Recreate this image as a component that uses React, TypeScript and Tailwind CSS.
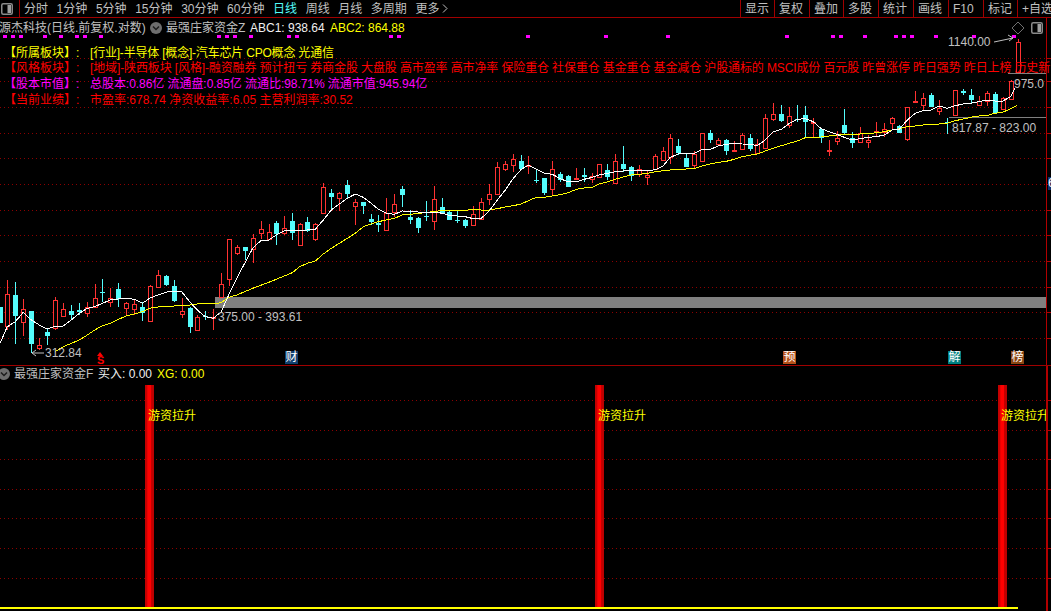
import React from "react";

type C = [number, number, number, number, number, number];
// [x, bodyTop, bodyBottom, high, low, isUp]
const zone3: C[] = [
[-1,380,428,380,428,0],[22,342,437,300,450,1],[46,345,407,306,492,0],[70,388,426,357,468,1],[94,393,492,393,520,0],[118,496,505,475,510,1],[142,456,468,445,495,0],[166,361,445,350,450,1],[190,388,407,368,412,1],[214,393,405,376,420,0],[238,391,397,370,405,0],[262,380,398,365,410,1],[284,355,381,312,385,1],[307,336,338,297,367,0],[331,355,367,325,380,1],[355,327,358,308,380,0],[379,369,383,365,405,1],[403,373,387,360,405,1],[427,381,398,365,422,0],[449,319,422,316,422,1],[473,286,320,270,322,1],[497,288,315,284,318,0],[521,319,364,300,366,0],[545,394,403,355,413,1],[569,385,440,382,458,0],[592,412,449,405,450,1],[616,409,411,392,420,0],[640,410,413,388,450,1],[664,313,350,280,352,1],[686,178,298,178,318,1],[710,202,218,195,224,1],[734,202,212,202,240,0],[758,175,207,162,248,1],[782,148,160,124,178,1],[806,157,177,132,180,1],[829,128,162,124,194,0],[853,145,160,108,166,1],[877,124,160,100,180,0],[899,132,194,130,197,1],[922,126,152,112,155,0],[946,132,176,128,182,1],[970,22,98,10,98,1],[994,39,50,28,90,0],[1018,40,55,36,92,1],[1042,15,42,0,55,0]];
const zone4: C[] = [
[16,247,257,238,315,1],[40,247,258,247,282,0],[64,297,305,282,315,0],[85,310,315,285,335,0],[109,280,329,235,329,1],[133,253,275,222,290,1],[157,208,225,198,260,0],[181,292,300,270,312,0],[205,294,323,290,338,0],[228,288,290,243,302,0],[253,238,304,198,330,1],[277,262,280,234,280,0],[298,275,299,270,300,0],[322,300,302,272,310,0],[346,300,318,296,323,0],[370,283,315,258,316,1],[394,247,298,235,300,1],[418,223,236,193,255,1],[442,141,221,126,224,1],[466,133,146,124,152,1],[490,118,134,102,155,1],[514,124,147,105,148,0],[535,136,138,108,162,1],[559,180,182,148,188,0],[583,175,219,175,225,0],[607,148,208,124,226,1],[631,163,179,156,186,0],[655,168,200,165,202,0],[679,175,178,144,180,1],[703,165,170,144,186,0],[727,169,177,160,188,1],[748,133,171,132,172,1],[772,151,170,132,180,0],[796,124,188,102,188,1],[820,132,148,78,155,0],[844,141,168,138,182,0],[868,148,162,135,170,1],[892,166,172,150,195,1],[916,109,146,103,150,1],[940,94,119,82,122,1],[961,54,110,42,132,1],[985,78,100,57,106,0],[1009,114,140,100,142,0],[1033,103,134,94,145,1]];
const zone5: C[] = [
[7,160,242,160,242,1],[31,160,180,150,188,0],[55,180,191,175,195,1],[79,181,213,178,225,0],[103,210,214,184,216,1],[127,166,207,158,208,1],[149,175,206,162,214,0],[172,193,218,178,220,1],[196,115,203,102,205,1],[220,102,118,70,122,1],[244,102,122,75,125,0],[268,109,135,82,145,1],[292,116,121,75,125,0],[316,104,127,78,175,0],[340,126,130,115,175,1],[362,148,174,145,190,0],[386,209,212,180,228,1],[410,173,182,152,196,1],[433,135,160,88,165,0],[457,175,188,156,204,0],[481,160,185,140,188,1],[505,180,186,165,204,1],[529,153,157,126,170,1],[553,146,156,130,170,1],[577,114,130,110,148,1],[598,139,158,135,160,0],[622,82,177,82,182,1],[646,64,67,34,68,1],[670,54,74,40,92,1],[694,44,80,40,82,0],[718,84,92,60,105,1],[742,125,127,115,163,0],[766,31,105,30,108,1],[790,34,39,28,44,0],[812,45,60,28,70,0],[836,62,74,48,78,1],[860,38,62,34,78,1],[884,42,100,36,102,0],[908,54,88,52,90,1],[932,3,58,0,58,1]];

const conv = (cs: C[], ox: number, oy: number): C[] =>
  cs.map(([x, a, b, h, l, u]) => [ox + x / 3, oy + a / 3, oy + b / 3, oy + h / 3, oy + l / 3, u] as C);

const candles: C[] = [
  ...conv(zone3, 0, 180),
  ...conv(zone4, 350, 120),
  ...conv(zone5, 700, 80),
  [1018, 42, 72, 39, 72, 1],
];

type P = [number, number];
const line = (ps: P[], ox: number, oy: number) => ps.map(([x, y]) => `${(ox + x / 3).toFixed(1)},${(oy + y / 3).toFixed(1)}`).join(" ");

const white3: P[] = [[0,490],[22,440],[46,425],[70,397],[94,420],[118,435],[142,447],[166,438],[190,438],[214,420],[238,400],[262,385],[284,380],[307,370],[331,360],[355,357],[379,355],[403,358],[427,370],[449,355],[473,345],[497,337],[521,333],[545,335],[569,365],[592,390],[616,410],[640,415],[664,395],[686,345],[710,295],[734,250],[758,205],[782,182],[806,180],[829,165],[853,153],[877,152],[899,152],[922,150],[946,148],[970,120],[994,90],[1018,72],[1042,55]];
const white4: P[] = [[16,222],[40,232],[64,250],[85,268],[109,280],[133,283],[157,273],[181,274],[205,276],[228,278],[253,276],[277,280],[298,286],[322,288],[346,290],[370,296],[394,295],[418,272],[442,240],[466,210],[490,175],[514,148],[535,136],[559,148],[583,160],[607,163],[631,176],[655,186],[679,185],[703,178],[727,172],[748,165],[772,160],[796,155],[820,153],[844,150],[868,153],[892,152],[916,149],[940,137],[961,112],[985,102],[1009,100],[1033,100]];
const white5: P[] = [[7,208],[31,208],[55,198],[79,193],[103,190],[127,192],[149,193],[172,197],[196,180],[220,155],[244,148],[268,130],[292,118],[316,116],[340,125],[362,145],[386,155],[410,163],[433,172],[457,180],[481,176],[505,172],[529,170],[553,165],[577,150],[598,148],[622,120],[646,100],[670,92],[694,90],[718,78],[742,85],[766,77],[790,72],[812,70],[836,65],[860,60],[884,63],[908,63],[932,50],[945,25]];
const yellow3: P[] = [[165,515],[190,500],[214,490],[238,480],[262,465],[284,450],[307,437],[331,430],[355,418],[379,408],[403,402],[427,395],[449,385],[473,381],[497,380],[521,378],[545,377],[569,375],[592,372],[616,370],[640,372],[664,368],[686,352],[710,345],[734,335],[758,325],[782,316],[806,307],[829,298],[853,288],[877,278],[899,260],[922,250],[946,243],[970,222],[994,205],[1018,190],[1042,175]];
const yellow4: P[] = [[16,340],[40,320],[64,312],[85,305],[109,300],[133,295],[157,285],[181,283],[205,280],[228,278],[253,274],[277,272],[298,271],[346,271],[370,268],[394,270],[418,270],[442,266],[466,261],[490,257],[514,252],[535,242],[559,232],[583,232],[607,228],[631,224],[655,218],[679,208],[703,204],[727,202],[748,192],[772,186],[796,178],[820,171],[844,165],[868,163],[892,160],[916,155],[940,152],[961,150],[985,148],[1009,147],[1033,146]];
const yellow5: P[] = [[7,258],[31,252],[55,247],[79,244],[103,238],[127,230],[149,226],[172,222],[196,213],[220,205],[244,197],[268,190],[292,183],[316,173],[340,172],[362,171],[386,168],[410,165],[433,162],[457,162],[481,162],[505,161],[529,158],[553,155],[577,150],[598,146],[622,140],[646,138],[670,135],[694,133],[718,132],[742,130],[766,122],[790,117],[812,112],[836,108],[860,107],[884,100],[908,97],[932,86],[952,76]];

const whitePts = [line(white3, 0, 180), line(white4, 350, 120), line(white5, 700, 80)].join(" ");
const yellowPts = [line(yellow3, 0, 180), line(yellow4, 350, 120), line(yellow5, 700, 80)].join(" ");

const RED = "#ff3232";
const CYAN = "#54fcfc";
const GRID = "#8c0000";
const AXIS = "#b00000";

const mainGrid = [58, 81, 107, 133, 158, 184, 210, 235, 261, 287, 312, 338];
const subGrid = [400, 430, 459, 489, 518, 548, 578];
const dots = [5, 13, 21, 45, 61, 77, 85, 101, 219, 227, 235, 251, 289, 297, 391, 399, 528, 606, 668, 787, 833, 841, 865, 896, 904, 912, 936, 974, 1014];

function Candle({ c }: { c: C }) {
  const [x0, a, b, h, l, up] = c;
  const x = Math.round(x0);
  const t = Math.round(a);
  const bt = Math.max(Math.round(b), t + 1);
  const hi = Math.round(h);
  const lo = Math.round(l);
  const col = up ? RED : CYAN;
  return (
    <g shapeRendering="crispEdges">
      <line x1={x + 0.5} x2={x + 0.5} y1={hi} y2={t} stroke={col} />
      <line x1={x + 0.5} x2={x + 0.5} y1={bt} y2={lo} stroke={col} />
      {up ? (
        <rect x={x - 1.5} y={t + 0.5} width={4} height={bt - t} fill="#000" stroke={col} />
      ) : (
        <rect x={x - 2} y={t} width={5} height={bt - t} fill={col} />
      )}
    </g>
  );
}

function PanelIcon({ className }: { className: string }) {
  return (
    <svg className={className} width="12" height="12" viewBox="0 0 12 12">
      <rect x="0.75" y="0.75" width="10.5" height="10.5" rx="1.5" fill="#000" stroke="#8a8a8a" strokeWidth="1.5" />
      <rect x="6.5" y="2" width="3.5" height="8" fill="#a0a0a0" />
    </svg>
  );
}

function Chevron({ className }: { className: string }) {
  return (
    <svg className={className} width="12" height="12" viewBox="0 0 12 12">
      <circle cx="6" cy="6" r="6" fill="#6e6e6e" />
      <path d="M3 4.5 L6 7.5 L9 4.5" fill="none" stroke="#1c1c1c" strokeWidth="1.5" />
    </svg>
  );
}

const navLeft = ["分时", "1分钟", "5分钟", "15分钟", "30分钟", "60分钟", "日线", "周线", "月线", "多周期", "更多"];
const navRight: [string, string][] = [
  ["显示", "w-[34px]"], ["复权", "w-[35px]"], ["叠加", "w-[34px]"], ["多股", "w-[35px]"], ["统计", "w-[35px]"],
  ["画线", "w-[35px]"], ["F10", "w-[35px]"], ["标记", "w-[34px]"], ["+自选", "w-[34px]"],
];

const rows: { label: string; text: string; labelCls: string; textCls: string }[] = [
  { label: "【所属板块】:", text: "[行业]-半导体 [概念]-汽车芯片 CPO概念 光通信", labelCls: "text-[#ffff00]", textCls: "text-[#ffff00] tracking-[-0.2px]" },
  { label: "【风格板块】:", text: "[地域]-陕西板块 [风格]-融资融券 预计扭亏 券商金股 大盘股 高市盈率 高市净率 保险重仓 社保重仓 基金重仓 基金减仓 沪股通标的 MSCI成份 百元股 昨曾涨停 昨日强势 昨日上榜 历史新高", labelCls: "text-[#ff0000]", textCls: "text-[#ff0000] tracking-[-0.12px]" },
  { label: "【股本市值】:", text: "总股本:0.86亿 流通盘:0.85亿 流通比:98.71% 流通市值:945.94亿", labelCls: "text-[#ff00ff]", textCls: "text-[#ff00ff] tracking-[-0.05px]" },
  { label: "【当前业绩】:", text: "市盈率:678.74 净资收益率:6.05 主营利润率:30.52", labelCls: "text-[#ff0000]", textCls: "text-[#ff0000]" },
];

const markers: [string, string, string][] = [
  ["财", "left-[285px]", "bg-[#12406e]"],
  ["预", "left-[783px]", "bg-[#b5501a]"],
  ["解", "left-[948px]", "bg-[#008080]"],
  ["榜", "left-[1011px]", "bg-[#8b4513]"],
];

export default function App() {
  return (
    <div className="w-[1051px] h-[611px] bg-black overflow-hidden flex flex-col text-[12px] leading-[16px] text-[#c0c0c0] font-['Liberation_Sans','Noto_Sans_CJK_SC',sans-serif]">
      {/* toolbar */}
      <div className="h-[18px] shrink-0 flex items-stretch border-b border-[#a00000] whitespace-nowrap">
        <div className="w-[20px] shrink-0 border-r border-[#a00000] flex items-center pl-[1px]">
          <PanelIcon className="block" />
        </div>
        <div className="flex items-center gap-[8.6px] pl-[4px]">
          {navLeft.map((n) => (
            <span key={n} className={n === "日线" ? "text-[#54fcfc]" : ""}>{n}</span>
          ))}
          <svg width="6" height="9" viewBox="0 0 6 9" className="-ml-[6px]">
            <path d="M1 0.5 L5 4.5 L1 8.5" fill="none" stroke="#c0c0c0" />
          </svg>
        </div>
        <div className="ml-auto flex items-stretch">
          {navRight.map(([n, w]) => (
            <div key={n} className={`${w} border-l border-[#a00000] pl-[4px] flex items-center overflow-hidden`}>{n}</div>
          ))}
        </div>
      </div>

      {/* main chart */}
      <div className="relative h-[348px] shrink-0 border-b border-[#a00000]">
        <svg className="absolute left-0 top-0" width="1051" height="347" viewBox="0 18 1051 347">
          {mainGrid.map((y) => (
            <g key={y}>
              <line x1="0" x2="1046" y1={y + 0.5} y2={y + 0.5} stroke={GRID} strokeDasharray="1 3" />
              <line x1="1047" x2="1051" y1={y + 0.5} y2={y + 0.5} stroke={AXIS} />
            </g>
          ))}
          <g shapeRendering="crispEdges">
            <rect x="215" y="297" width="831" height="11" fill="#808080" />
            <rect x="1008" y="73" width="38" height="1" fill="#808080" />
            <rect x="949" y="117" width="97" height="1" fill="#808080" />
            <rect x="1046" y="18" width="1" height="347" fill={AXIS} />
            {dots.map((x) => (
              <rect key={x} x={x - 2} y="35" width="4" height="3" fill="#ff00ff" />
            ))}
          </g>
          {candles.map((c, i) => (
            <Candle key={i} c={c} />
          ))}
          <polyline points={yellowPts} fill="none" stroke="#ffff00" strokeWidth="1" shapeRendering="crispEdges" />
          <polyline points={whitePts} fill="none" stroke="#ffffff" strokeWidth="1" shapeRendering="crispEdges" />
          <path d="M44 353 H32 M36 350 L32 353 L36 356" fill="none" stroke="#c0c0c0" />
          <path d="M994 42 L1013 38 M1008 35 L1013 38 L1009 41" fill="none" stroke="#c0c0c0" />
          <path d="M1018 22 L1024 28 L1018 34 L1012 28 Z" fill="none" stroke="#707070" />
          <path d="M100 352 L103 356 H97 Z" fill="#ff0000" />
        </svg>

        {/* header rows */}
        <div className="relative flex items-center h-[19px] whitespace-nowrap">
          <span className="-ml-[1px] w-[151px] shrink-0">源杰科技(日线.前复权.对数)</span>
          <Chevron className="shrink-0" />
          <span className="ml-[4px] w-[84px] shrink-0">最强庄家资金Z</span>
          <span className="text-[#f0f0f0] w-[80px] shrink-0">ABC1: 938.64</span>
          <span className="text-[#ffff00]">ABC2: 864.88</span>
        </div>
        <div className="relative mt-[8px] whitespace-nowrap">
          {rows.map((r) => (
            <div key={r.label} className="flex h-[15.6px] items-center">
              <span className={`${r.labelCls} w-[90px] shrink-0 pl-[4px]`}>{r.label}</span>
              <span className={r.textCls}>{r.text}</span>
            </div>
          ))}
        </div>

        {/* price labels */}
        <PanelIcon className="absolute left-[1031px] top-[4px]" />
        <span className="absolute left-[948px] top-[16px]">1140.00</span>
        <span className="absolute left-[1014px] top-[58px]">975.0</span>
        <span className="absolute left-[952px] top-[102px]">817.87 - 823.00</span>
        <span className="absolute left-[218px] top-[291px]">375.00 - 393.61</span>
        <span className="absolute left-[45px] top-[327px]">312.84</span>
        <span className="absolute left-[97px] top-[337px] text-[#ff0000] font-bold text-[11px] leading-[11px]">S</span>
        {markers.map(([t, left, bg]) => (
          <span key={t} className={`absolute ${left} top-[333px] w-[13px] h-[13px] ${bg} text-white leading-[13px] text-center`}>{t}</span>
        ))}
        <span className="absolute left-[1048px] top-[159px] w-[4px] h-[13px] bg-[#12306e] text-white leading-[13px] overflow-hidden">6</span>
      </div>

      {/* sub chart */}
      <div className="relative flex-1">
        <svg className="absolute left-0 top-0" width="1051" height="245" viewBox="0 366 1051 245">
          <defs>
            <linearGradient id="bar" x1="0" x2="1" y1="0" y2="0">
              <stop offset="0" stopColor="#c00000" />
              <stop offset="0.24" stopColor="#cc0000" />
              <stop offset="0.3" stopColor="#ff0000" />
              <stop offset="0.62" stopColor="#ff0000" />
              <stop offset="0.68" stopColor="#c80000" />
              <stop offset="1" stopColor="#b80000" />
            </linearGradient>
          </defs>
          {subGrid.map((y) => (
            <g key={y}>
              <line x1="0" x2="1046" y1={y + 0.5} y2={y + 0.5} stroke={GRID} strokeDasharray="1 3" />
              <line x1="1047" x2="1051" y1={y + 0.5} y2={y + 0.5} stroke={AXIS} />
            </g>
          ))}
          <g shapeRendering="crispEdges">
            {[145, 595, 998].map((x) => (
              <rect key={x} x={x} y="385" width="9" height="223" fill="url(#bar)" />
            ))}
            <rect x="0" y="607" width="1018" height="2" fill="#ffff00" />
            <rect x="1046" y="366" width="2" height="245" fill={AXIS} />
          </g>
        </svg>
        <div className="relative flex items-center h-[16px] whitespace-nowrap">
          <Chevron className="-ml-[2px] shrink-0" />
          <span className="ml-[4px] w-[84px] shrink-0">最强庄家资金F</span>
          <span className="text-[#f0f0f0] w-[59px] shrink-0">买入: 0.00</span>
          <span className="text-[#ffff00]">XG: 0.00</span>
        </div>
        <span className="absolute left-[148px] top-[42px] text-[#ffff00]">游资拉升</span>
        <span className="absolute left-[598px] top-[42px] text-[#ffff00]">游资拉升</span>
        <span className="absolute left-[1001px] top-[42px] w-[45px] overflow-hidden whitespace-nowrap text-[#ffff00]">游资拉升</span>
      </div>
    </div>
  );
}
